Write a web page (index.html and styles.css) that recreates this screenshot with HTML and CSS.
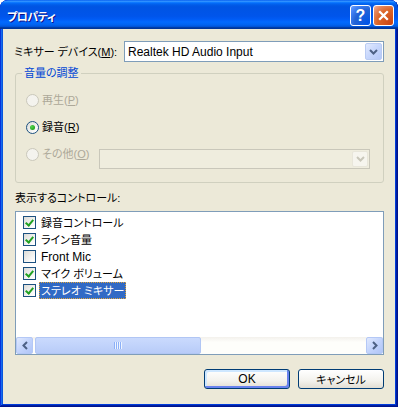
FILE: index.html
```html
<!DOCTYPE html>
<html lang="ja">
<head>
    <meta charset="UTF-8">
    <title>プロパティ</title>
    <link rel="stylesheet" href="styles.css">
</head>
<body>
<div class="window">
    <div class="titlebar">
        <span class="title">プロパティ</span>
        <div class="title-buttons">
            <button class="tbtn help" aria-label="ヘルプ">?</button>
            <button class="tbtn close" aria-label="閉じる">
                <svg width="11" height="11" viewBox="0 0 11 11"><path d="M1.2 1.2l8.6 8.6M9.8 1.2l-8.6 8.6" stroke="#fff" stroke-width="2.3"/></svg>
            </button>
        </div>
    </div>
    <div class="client">
        <div class="device-row">
            <label class="device-label">ミキサー デバイス(<u>M</u>):</label>
            <div class="combo device-combo">
                <span class="combo-text en">Realtek HD Audio Input</span>
                <span class="drop-btn">
                    <svg width="9" height="6" viewBox="0 0 9 6"><path d="M1 1l3.5 3.5L8 1" fill="none" stroke="#4d6185" stroke-width="2"/></svg>
                </span>
            </div>
        </div>

        <fieldset class="group">
            <legend>音量の調整</legend>
            <div class="radio-row disabled">
                <span class="radio"></span>
                <span>再生(<u>P</u>)</span>
            </div>
            <div class="radio-row">
                <span class="radio checked"></span>
                <span>録音(<u>R</u>)</span>
            </div>
            <div class="radio-row other disabled">
                <div class="radio-opt">
                    <span class="radio"></span>
                    <span>その他(<u>O</u>)</span>
                </div>
                <div class="combo other-combo">
                    <span class="combo-text"></span>
                    <span class="drop-btn">
                        <svg width="9" height="6" viewBox="0 0 9 6"><path d="M1 1l3.5 3.5L8 1" fill="none" stroke="#c9c7ba" stroke-width="2"/></svg>
                    </span>
                </div>
            </div>
        </fieldset>

        <div class="list-label">表示するコントロール:</div>
        <div class="listbox">
            <div class="items">
                <div class="item"><span class="check on"></span><span class="item-text">録音コントロール</span></div>
                <div class="item"><span class="check on"></span><span class="item-text">ライン音量</span></div>
                <div class="item"><span class="check"></span><span class="item-text en">Front Mic</span></div>
                <div class="item"><span class="check on"></span><span class="item-text">マイク ボリューム</span></div>
                <div class="item"><span class="check on"></span><span class="item-text selected">ステレオ ミキサー</span></div>
            </div>
            <div class="hscroll">
                <span class="sb-btn">
                    <svg width="6" height="9" viewBox="0 0 6 9"><path d="M5 1L1.5 4.5 5 8" fill="none" stroke="#4d6185" stroke-width="2"/></svg>
                </span>
                <div class="sb-track">
                    <span class="sb-thumb"><span class="grip"></span></span>
                </div>
                <span class="sb-btn">
                    <svg width="6" height="9" viewBox="0 0 6 9"><path d="M1 1l3.5 3.5L1 8" fill="none" stroke="#4d6185" stroke-width="2"/></svg>
                </span>
            </div>
        </div>

        <div class="buttons">
            <button class="btn default en">OK</button>
            <button class="btn">キャンセル</button>
        </div>
    </div>
</div>
</body>
</html>
```

FILE: styles.css
```css
* {
    box-sizing: border-box;
}
body {
    margin: 0;
    background: #ffffff;
    font-family: "Liberation Sans", "Noto Sans CJK JP", sans-serif;
    font-size: 11px;
    line-height: 14px;
    color: #000000;
    font-feature-settings: "palt";
}
.en {
    font-size: 12px;
}
u {
    text-decoration: underline;
    text-underline-offset: 1px;
}
.window {
    width: 398px;
    height: 407px;
    display: flex;
    flex-direction: column;
    background: #0831d9;
    border-radius: 8px 8px 0 0;
    overflow: hidden;
    box-shadow: inset -1px -1px #00138c, inset 1px 1px #0831d9, inset -2px -2px #001ea0, inset 2px 2px #166aee, inset -3px -3px #003bda, inset 3px 3px #0855dd;
}
.titlebar {
    height: 29px;
    flex: none;
    display: flex;
    align-items: center;
    justify-content: space-between;
    padding: 2px 4px 0 7px;
    background: linear-gradient(to bottom, #0058ee 0%, #3593ff 4%, #288eff 6%, #127dff 8%, #036ffc 10%, #0262ee 14%, #0057e5 20%, #0054e3 24%, #0055eb 56%, #005bf5 66%, #026afe 76%, #0062ef 86%, #0052d6 92%, #0040ab 94%, #003092 100%);
    border-radius: 8px 8px 0 0;
}
.title {
    color: #ffffff;
    font-weight: bold;
    font-size: 11px;
    letter-spacing: -0.5px;
    text-shadow: 1px 1px #0f1089;
    font-family: "Noto Sans CJK JP", sans-serif;
}
.title-buttons {
    display: flex;
    gap: 2px;
}
.tbtn {
    width: 21px;
    height: 21px;
    padding: 0;
    border: 1px solid #ffffff;
    border-radius: 3px;
    display: flex;
    align-items: center;
    justify-content: center;
    color: #ffffff;
    font-family: "Liberation Sans", sans-serif;
    font-weight: bold;
    font-size: 16px;
}
.help {
    background: radial-gradient(circle at 90% 90%, #0054e9 0%, #2263d5 55%, #4382f4 80%, #6fa3ff 100%);
}
.close {
    background: radial-gradient(circle at 90% 90%, #cc4614 0%, #dc6527 55%, #e5875e 80%, #f1b39f 100%);
}
.client {
    flex: 1;
    margin: 0 3px 3px;
    background: #ece9d8;
    padding: 12px 11px 0 12px;
}
.device-row {
    display: flex;
    align-items: center;
    justify-content: space-between;
}
.device-label {
    margin-left: -1px;
    white-space: nowrap;
}
.combo {
    height: 21px;
    border: 1px solid #7f9db9;
    background: #ffffff;
    display: flex;
    align-items: center;
    justify-content: space-between;
}
.device-combo {
    width: 260px;
    flex: none;
}
.combo-text {
    padding-left: 3px;
}
.drop-btn {
    width: 17px;
    height: 17px;
    margin-right: 1px;
    border: 1px solid #b9cbf3;
    border-radius: 2px;
    background: linear-gradient(135deg, #e2eafe 0%, #c6d6fc 50%, #b5c8f7 100%);
    display: flex;
    align-items: center;
    justify-content: center;
}
.group {
    margin: 4px 0 0;
    border: 1px solid #d0d0bf;
    border-radius: 3px;
    padding: 10px 13px 13px 10px;
}
.group legend {
    color: #0046d5;
    padding: 0 2px;
    margin-left: -4px;
    line-height: 14px;
}
.radio-row {
    display: flex;
    align-items: center;
    gap: 3px;
    height: 20px;
    margin-bottom: 7px;
}
.radio-row.other {
    height: auto;
    align-items: flex-start;
    margin-bottom: 0;
}
.radio-opt {
    display: flex;
    align-items: center;
    gap: 3px;
    height: 20px;
}
.radio {
    width: 13px;
    height: 13px;
    border-radius: 50%;
    border: 1px solid #1c5180;
    background: linear-gradient(135deg, #dcdcd7 0%, #ffffff 90%);
    display: flex;
    align-items: center;
    justify-content: center;
}
.radio.checked::after {
    content: "";
    width: 5px;
    height: 5px;
    border-radius: 50%;
    background: radial-gradient(circle at 35% 35%, #55d551 0%, #29ad25 60%, #1a8e17 100%);
}
.disabled {
    color: #aca899;
}
.disabled .radio {
    border-color: #cac8bb;
    background: #f4f3ee;
}
.other-combo {
    width: 271px;
    height: 20px;
    margin-top: 5px;
    margin-left: auto;
    border-color: #c9c7ba;
    background: #efedde;
}
.other-combo .drop-btn {
    height: 16px;
    width: 16px;
    border-color: #e8e6da;
    background: #f6f5ee;
}
.list-label {
    margin-top: 8px;
}
.listbox {
    margin-top: 6px;
    height: 144px;
    border: 1px solid #7f9db9;
    background: #ffffff;
    display: flex;
    flex-direction: column;
}
.items {
    flex: 1;
    padding: 2px 0 0 7px;
}
.item {
    height: 17px;
    display: flex;
    align-items: center;
}
.check {
    width: 13px;
    height: 13px;
    border: 1px solid #1c5180;
    background: linear-gradient(135deg, #dcdcd7 0%, #ffffff 90%);
    position: relative;
}
.check.on::after {
    content: "";
    position: absolute;
    left: 3px;
    top: 1px;
    width: 3px;
    height: 6px;
    border: solid #21a121;
    border-width: 0 2px 2px 0;
    transform: rotate(40deg);
}
.item-text {
    margin-left: 3px;
    padding: 0 2px;
    height: 17px;
    display: flex;
    align-items: center;
}
.item-text.selected {
    background: #316ac5;
    color: #ffffff;
    outline: 1px dotted #e0a53a;
    outline-offset: -1px;
}
.hscroll {
    height: 17px;
    flex: none;
    display: flex;
    background: linear-gradient(to bottom, #f3f1ec 0%, #fefefb 30%, #fefefb 100%);
}
.sb-btn {
    width: 17px;
    height: 17px;
    flex: none;
    border: 1px solid #b4c8f6;
    border-radius: 2px;
    background: linear-gradient(135deg, #e0e9fe 0%, #c3d4fc 50%, #b0c5f7 100%);
    display: flex;
    align-items: center;
    justify-content: center;
}
.sb-track {
    flex: 1;
    display: flex;
}
.sb-thumb {
    width: 166px;
    margin-left: 2px;
    border: 1px solid #b1c6f4;
    border-radius: 2px;
    background: linear-gradient(to bottom, #cadafd 0%, #c1d3fb 50%, #b8cbf8 100%);
    display: flex;
    align-items: center;
    justify-content: center;
}
.grip {
    width: 8px;
    height: 7px;
    background: repeating-linear-gradient(to right, #8cb0f8 0, #8cb0f8 1px, #eef4fe 1px, #eef4fe 2px);
}
.buttons {
    display: flex;
    justify-content: flex-end;
    gap: 8px;
    margin-top: 14px;
}
.btn {
    width: 86px;
    height: 20px;
    padding: 0;
    border: 1px solid #003c74;
    border-radius: 3px;
    background: linear-gradient(to bottom, #ffffff 0%, #f3f2ed 60%, #e2ded3 100%);
    font-family: "Liberation Sans", "Noto Sans CJK JP", sans-serif;
    font-size: 11px;
    font-feature-settings: "palt";
    color: #000000;
}
.btn.en {
    font-size: 12px;
}
.btn.default {
    box-shadow: inset -2px -2px #6982ee, inset 2px 2px #cee7ff;
}
```
